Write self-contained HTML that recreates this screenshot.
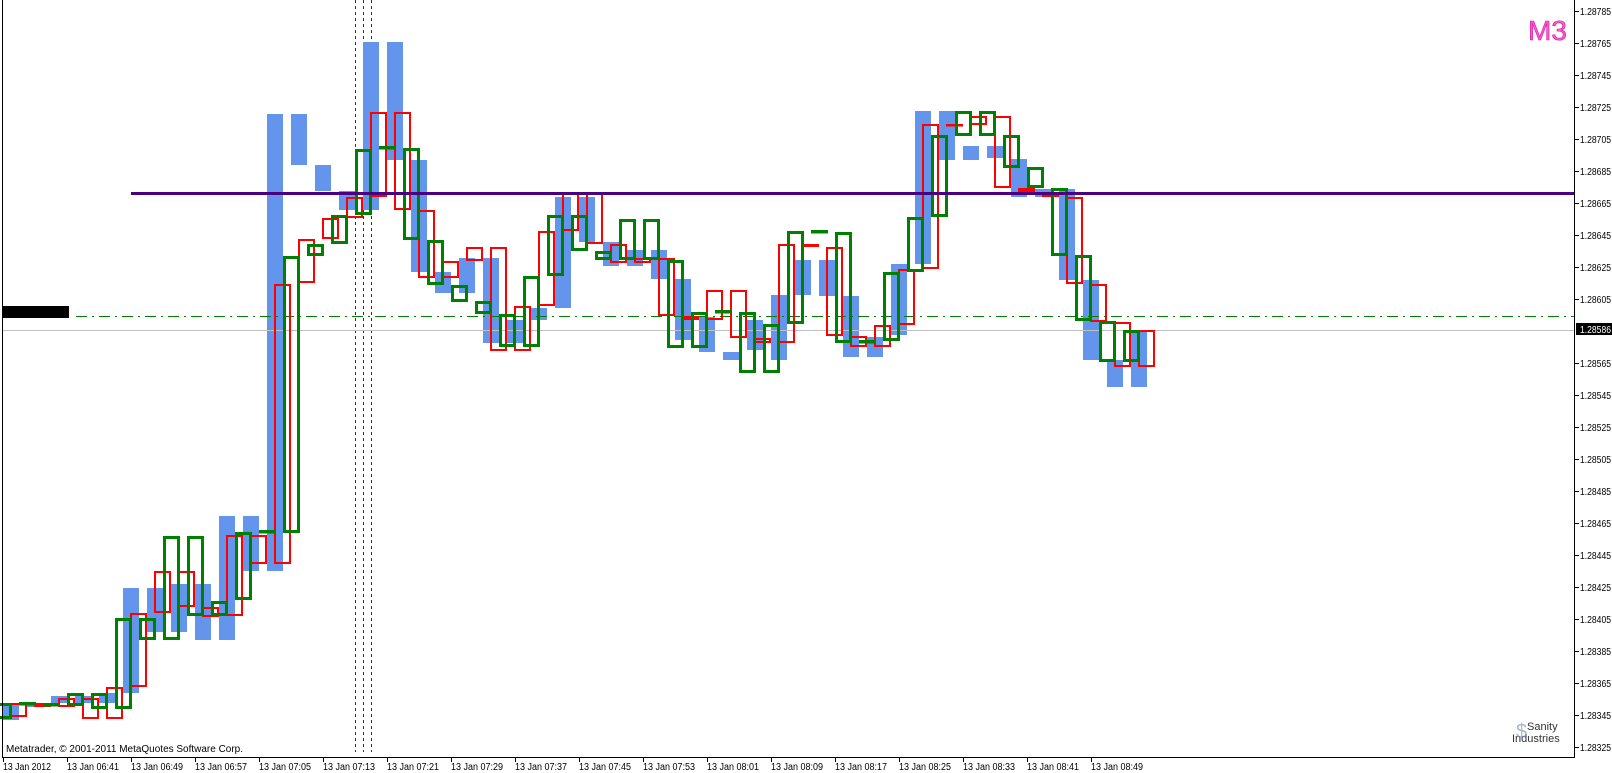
<!DOCTYPE html>
<html><head><meta charset="utf-8"><style>
html,body{margin:0;padding:0;background:#fff;width:1612px;height:773px;overflow:hidden}
svg{display:block}
text{font-family:"Liberation Sans",sans-serif}
</style></head><body>
<svg width="1612" height="773" viewBox="0 0 1612 773" xmlns="http://www.w3.org/2000/svg">
<rect width="1612" height="773" fill="#fff"/>
<g stroke="#333" stroke-width="1" stroke-dasharray="3,3">
<line x1="355.5" y1="0" x2="355.5" y2="752"/><line x1="363.5" y1="0" x2="363.5" y2="752"/><line x1="371.5" y1="0" x2="371.5" y2="752"/>
</g>
<g fill="#6495ed">
<rect x="3" y="703" width="16" height="17"/><rect x="27" y="703" width="16" height="4"/><rect x="51" y="696" width="16" height="7"/><rect x="75" y="696" width="16" height="7"/><rect x="99" y="693" width="16" height="10"/><rect x="123" y="588" width="16" height="105"/><rect x="147" y="588" width="16" height="44"/><rect x="171" y="584" width="16" height="48"/><rect x="195" y="584" width="16" height="56"/><rect x="219" y="516" width="16" height="124"/><rect x="243" y="516" width="16" height="55"/><rect x="267" y="114" width="16" height="457"/><rect x="291" y="114" width="16" height="51"/><rect x="315" y="165" width="16" height="26"/><rect x="339" y="191" width="16" height="19"/><rect x="363" y="42" width="16" height="168"/><rect x="387" y="42" width="16" height="118"/><rect x="411" y="160" width="16" height="112"/><rect x="435" y="272" width="16" height="21"/><rect x="459" y="258" width="16" height="35"/><rect x="483" y="258" width="16" height="85"/><rect x="507" y="320" width="16" height="23"/><rect x="531" y="308" width="16" height="12"/><rect x="555" y="197" width="16" height="111"/><rect x="579" y="197" width="16" height="45"/><rect x="603" y="242" width="16" height="24"/><rect x="627" y="250" width="16" height="16"/><rect x="651" y="250" width="16" height="29"/><rect x="675" y="279" width="16" height="61"/><rect x="699" y="317" width="16" height="35"/><rect x="723" y="352" width="16" height="8"/><rect x="747" y="320" width="16" height="30"/><rect x="771" y="295" width="16" height="65"/><rect x="795" y="260" width="16" height="35"/><rect x="819" y="260" width="16" height="36"/><rect x="843" y="296" width="16" height="61"/><rect x="867" y="337" width="16" height="20"/><rect x="891" y="264" width="16" height="71"/><rect x="915" y="111" width="16" height="153"/><rect x="939" y="111" width="16" height="49"/><rect x="963" y="146" width="16" height="14"/><rect x="987" y="146" width="16" height="12"/><rect x="1011" y="159" width="16" height="38"/><rect x="1035" y="189" width="16" height="8"/><rect x="1059" y="189" width="16" height="91"/><rect x="1083" y="280" width="16" height="80"/><rect x="1107" y="360" width="16" height="27"/><rect x="1131" y="330" width="16" height="57"/>
</g>
<line x1="2" y1="330.5" x2="1574" y2="330.5" stroke="#c0c0c0" stroke-width="1"/>
<line x1="76" y1="316.5" x2="1574" y2="316.5" stroke="#008000" stroke-width="1" stroke-dasharray="11,5,2,5"/>
<rect x="2" y="306" width="67" height="12" fill="#000"/>
<g fill="none" stroke="#f00" stroke-width="2">
<rect x="11" y="704" width="15" height="12"/><rect x="35" y="704" width="15" height="2"/><rect x="59" y="699" width="15" height="7"/><rect x="83" y="699" width="15" height="19"/><rect x="107" y="688" width="15" height="30"/><rect x="131" y="614" width="15" height="72"/><rect x="155" y="572" width="15" height="40"/><rect x="179" y="572" width="15" height="34"/><rect x="203" y="608" width="15" height="8"/><rect x="227" y="536" width="15" height="79"/><rect x="251" y="536" width="15" height="27"/><rect x="275" y="285" width="15" height="278"/><rect x="299" y="240" width="15" height="42"/><rect x="323" y="219" width="15" height="19"/><rect x="347" y="198" width="15" height="19"/><rect x="371" y="113" width="15" height="83"/><rect x="395" y="113" width="15" height="96"/><rect x="419" y="211" width="15" height="66"/><rect x="443" y="262" width="15" height="15"/><rect x="467" y="248" width="15" height="12"/><rect x="491" y="248" width="15" height="102"/><rect x="515" y="307" width="15" height="43"/><rect x="539" y="232" width="15" height="73"/><rect x="563" y="194" width="15" height="36"/><rect x="587" y="194" width="15" height="49"/><rect x="611" y="245" width="15" height="17"/><rect x="635" y="259" width="15" height="3"/><rect x="659" y="259" width="15" height="56"/><rect x="683" y="317" width="15" height="2"/><rect x="707" y="291" width="15" height="28"/><rect x="731" y="291" width="15" height="46"/><rect x="755" y="339" width="15" height="3"/><rect x="779" y="245" width="15" height="97"/><rect x="803" y="245" width="15" height="1"/><rect x="827" y="248" width="15" height="87"/><rect x="851" y="337" width="15" height="9"/><rect x="875" y="326" width="15" height="20"/><rect x="899" y="270" width="15" height="54"/><rect x="923" y="125" width="15" height="143"/><rect x="947" y="125" width="15" height="0.5"/><rect x="971" y="117" width="15" height="7"/><rect x="995" y="117" width="15" height="70"/><rect x="1019" y="189" width="15" height="2"/><rect x="1043" y="193" width="15" height="3"/><rect x="1067" y="198" width="15" height="85"/><rect x="1091" y="285" width="15" height="36"/><rect x="1115" y="323" width="15" height="43"/><rect x="1139" y="331" width="15" height="35"/>
</g>
<g fill="none" stroke="#008000" stroke-width="3">
<rect x="-3.5" y="704.5" width="14" height="13"/><rect x="20.5" y="703.5" width="14" height="0.5"/><rect x="44.5" y="704.5" width="14" height="0.5"/><rect x="68.5" y="694.5" width="14" height="10"/><rect x="92.5" y="694.5" width="14" height="13"/><rect x="116.5" y="619.5" width="14" height="88"/><rect x="140.5" y="619.5" width="14" height="19"/><rect x="164.5" y="537.5" width="14" height="101"/><rect x="188.5" y="537.5" width="14" height="77"/><rect x="212.5" y="602.5" width="14" height="12"/><rect x="236.5" y="533.5" width="14" height="65"/><rect x="260.5" y="531.5" width="14" height="0.5"/><rect x="284.5" y="257.5" width="14" height="274"/><rect x="308.5" y="245.5" width="14" height="9"/><rect x="332.5" y="216.5" width="14" height="26"/><rect x="356.5" y="150.5" width="14" height="63"/><rect x="380.5" y="147.5" width="14" height="0.5"/><rect x="404.5" y="149.5" width="14" height="89"/><rect x="428.5" y="241.5" width="14" height="42"/><rect x="452.5" y="286.5" width="14" height="14"/><rect x="476.5" y="302.5" width="14" height="10"/><rect x="500.5" y="315.5" width="14" height="30"/><rect x="524.5" y="277.5" width="14" height="68"/><rect x="548.5" y="216.5" width="14" height="58"/><rect x="572.5" y="216.5" width="14" height="33"/><rect x="596.5" y="252.5" width="14" height="6"/><rect x="620.5" y="220.5" width="14" height="38"/><rect x="644.5" y="220.5" width="14" height="38"/><rect x="668.5" y="261.5" width="14" height="85"/><rect x="692.5" y="313.5" width="14" height="33"/><rect x="716.5" y="311.5" width="14" height="0.5"/><rect x="740.5" y="313.5" width="14" height="58"/><rect x="764.5" y="325.5" width="14" height="46"/><rect x="788.5" y="232.5" width="14" height="90"/><rect x="812.5" y="231.5" width="14" height="0.5"/><rect x="836.5" y="233.5" width="14" height="108"/><rect x="860.5" y="341.5" width="14" height="0.5"/><rect x="884.5" y="273.5" width="14" height="66"/><rect x="908.5" y="218.5" width="14" height="52"/><rect x="932.5" y="136.5" width="14" height="79"/><rect x="956.5" y="112.5" width="14" height="22"/><rect x="980.5" y="112.5" width="14" height="22"/><rect x="1004.5" y="136.5" width="14" height="30"/><rect x="1028.5" y="168.5" width="14" height="18"/><rect x="1052.5" y="189.5" width="14" height="65"/><rect x="1076.5" y="256.5" width="14" height="63"/><rect x="1100.5" y="322.5" width="14" height="38"/><rect x="1124.5" y="331.5" width="14" height="29"/>
</g>
<rect x="131" y="192" width="1443" height="3" fill="#4b0082"/>
<line x1="2.5" y1="0" x2="2.5" y2="757" stroke="#000"/>
<line x1="1574.5" y1="0" x2="1574.5" y2="757" stroke="#000"/>
<line x1="2" y1="757.5" x2="1575" y2="757.5" stroke="#000"/>
<text x="1528" y="40" font-size="28" fill="#f060d0" stroke="#e0109a" stroke-width="0.6">M3</text>
<text x="6" y="752" font-size="10" fill="#000" textLength="237" lengthAdjust="spacingAndGlyphs">Metatrader, © 2001-2011 MetaQuotes Software Corp.</text>
<text x="1527" y="730" font-size="11" fill="#333">Sanity</text>
<text x="1512" y="742" font-size="11" fill="#333">Industries</text>
<text x="1516" y="738" font-size="20" fill="#6a8ab0" opacity="0.6">$</text>
<g stroke="#000">
<line x1="1575" y1="11.5" x2="1579" y2="11.5"/><line x1="1575" y1="43.5" x2="1579" y2="43.5"/><line x1="1575" y1="75.5" x2="1579" y2="75.5"/><line x1="1575" y1="107.5" x2="1579" y2="107.5"/><line x1="1575" y1="139.5" x2="1579" y2="139.5"/><line x1="1575" y1="171.5" x2="1579" y2="171.5"/><line x1="1575" y1="203.5" x2="1579" y2="203.5"/><line x1="1575" y1="235.5" x2="1579" y2="235.5"/><line x1="1575" y1="267.5" x2="1579" y2="267.5"/><line x1="1575" y1="299.5" x2="1579" y2="299.5"/><line x1="1575" y1="363.5" x2="1579" y2="363.5"/><line x1="1575" y1="395.5" x2="1579" y2="395.5"/><line x1="1575" y1="427.5" x2="1579" y2="427.5"/><line x1="1575" y1="459.5" x2="1579" y2="459.5"/><line x1="1575" y1="491.5" x2="1579" y2="491.5"/><line x1="1575" y1="523.5" x2="1579" y2="523.5"/><line x1="1575" y1="555.5" x2="1579" y2="555.5"/><line x1="1575" y1="587.5" x2="1579" y2="587.5"/><line x1="1575" y1="619.5" x2="1579" y2="619.5"/><line x1="1575" y1="651.5" x2="1579" y2="651.5"/><line x1="1575" y1="683.5" x2="1579" y2="683.5"/><line x1="1575" y1="715.5" x2="1579" y2="715.5"/><line x1="1575" y1="747.5" x2="1579" y2="747.5"/>
</g>
<g font-size="10" fill="#000" lengthAdjust="spacingAndGlyphs">
<text x="1580" y="15" textLength="31" lengthAdjust="spacingAndGlyphs">1.28785</text><text x="1580" y="47" textLength="31" lengthAdjust="spacingAndGlyphs">1.28765</text><text x="1580" y="79" textLength="31" lengthAdjust="spacingAndGlyphs">1.28745</text><text x="1580" y="111" textLength="31" lengthAdjust="spacingAndGlyphs">1.28725</text><text x="1580" y="143" textLength="31" lengthAdjust="spacingAndGlyphs">1.28705</text><text x="1580" y="175" textLength="31" lengthAdjust="spacingAndGlyphs">1.28685</text><text x="1580" y="207" textLength="31" lengthAdjust="spacingAndGlyphs">1.28665</text><text x="1580" y="239" textLength="31" lengthAdjust="spacingAndGlyphs">1.28645</text><text x="1580" y="271" textLength="31" lengthAdjust="spacingAndGlyphs">1.28625</text><text x="1580" y="303" textLength="31" lengthAdjust="spacingAndGlyphs">1.28605</text><text x="1580" y="367" textLength="31" lengthAdjust="spacingAndGlyphs">1.28565</text><text x="1580" y="399" textLength="31" lengthAdjust="spacingAndGlyphs">1.28545</text><text x="1580" y="431" textLength="31" lengthAdjust="spacingAndGlyphs">1.28525</text><text x="1580" y="463" textLength="31" lengthAdjust="spacingAndGlyphs">1.28505</text><text x="1580" y="495" textLength="31" lengthAdjust="spacingAndGlyphs">1.28485</text><text x="1580" y="527" textLength="31" lengthAdjust="spacingAndGlyphs">1.28465</text><text x="1580" y="559" textLength="31" lengthAdjust="spacingAndGlyphs">1.28445</text><text x="1580" y="591" textLength="31" lengthAdjust="spacingAndGlyphs">1.28425</text><text x="1580" y="623" textLength="31" lengthAdjust="spacingAndGlyphs">1.28405</text><text x="1580" y="655" textLength="31" lengthAdjust="spacingAndGlyphs">1.28385</text><text x="1580" y="687" textLength="31" lengthAdjust="spacingAndGlyphs">1.28365</text><text x="1580" y="719" textLength="31" lengthAdjust="spacingAndGlyphs">1.28345</text><text x="1580" y="751" textLength="31" lengthAdjust="spacingAndGlyphs">1.28325</text>
</g>
<rect x="1576" y="323" width="36" height="12" fill="#000"/>
<text x="1580" y="333" font-size="10" fill="#fff" textLength="31" lengthAdjust="spacingAndGlyphs">1.28586</text>
<g stroke="#000">
<line x1="3.5" y1="757" x2="3.5" y2="762"/><line x1="67.5" y1="757" x2="67.5" y2="762"/><line x1="131.5" y1="757" x2="131.5" y2="762"/><line x1="195.5" y1="757" x2="195.5" y2="762"/><line x1="259.5" y1="757" x2="259.5" y2="762"/><line x1="323.5" y1="757" x2="323.5" y2="762"/><line x1="387.5" y1="757" x2="387.5" y2="762"/><line x1="451.5" y1="757" x2="451.5" y2="762"/><line x1="515.5" y1="757" x2="515.5" y2="762"/><line x1="579.5" y1="757" x2="579.5" y2="762"/><line x1="643.5" y1="757" x2="643.5" y2="762"/><line x1="707.5" y1="757" x2="707.5" y2="762"/><line x1="771.5" y1="757" x2="771.5" y2="762"/><line x1="835.5" y1="757" x2="835.5" y2="762"/><line x1="899.5" y1="757" x2="899.5" y2="762"/><line x1="963.5" y1="757" x2="963.5" y2="762"/><line x1="1027.5" y1="757" x2="1027.5" y2="762"/><line x1="1091.5" y1="757" x2="1091.5" y2="762"/>
</g>
<g font-size="10" fill="#000">
<text x="3" y="770" textLength="48" lengthAdjust="spacingAndGlyphs">13 Jan 2012</text><text x="67" y="770" textLength="52" lengthAdjust="spacingAndGlyphs">13 Jan 06:41</text><text x="131" y="770" textLength="52" lengthAdjust="spacingAndGlyphs">13 Jan 06:49</text><text x="195" y="770" textLength="52" lengthAdjust="spacingAndGlyphs">13 Jan 06:57</text><text x="259" y="770" textLength="52" lengthAdjust="spacingAndGlyphs">13 Jan 07:05</text><text x="323" y="770" textLength="52" lengthAdjust="spacingAndGlyphs">13 Jan 07:13</text><text x="387" y="770" textLength="52" lengthAdjust="spacingAndGlyphs">13 Jan 07:21</text><text x="451" y="770" textLength="52" lengthAdjust="spacingAndGlyphs">13 Jan 07:29</text><text x="515" y="770" textLength="52" lengthAdjust="spacingAndGlyphs">13 Jan 07:37</text><text x="579" y="770" textLength="52" lengthAdjust="spacingAndGlyphs">13 Jan 07:45</text><text x="643" y="770" textLength="52" lengthAdjust="spacingAndGlyphs">13 Jan 07:53</text><text x="707" y="770" textLength="52" lengthAdjust="spacingAndGlyphs">13 Jan 08:01</text><text x="771" y="770" textLength="52" lengthAdjust="spacingAndGlyphs">13 Jan 08:09</text><text x="835" y="770" textLength="52" lengthAdjust="spacingAndGlyphs">13 Jan 08:17</text><text x="899" y="770" textLength="52" lengthAdjust="spacingAndGlyphs">13 Jan 08:25</text><text x="963" y="770" textLength="52" lengthAdjust="spacingAndGlyphs">13 Jan 08:33</text><text x="1027" y="770" textLength="52" lengthAdjust="spacingAndGlyphs">13 Jan 08:41</text><text x="1091" y="770" textLength="52" lengthAdjust="spacingAndGlyphs">13 Jan 08:49</text>
</g>
</svg>
</body></html>
